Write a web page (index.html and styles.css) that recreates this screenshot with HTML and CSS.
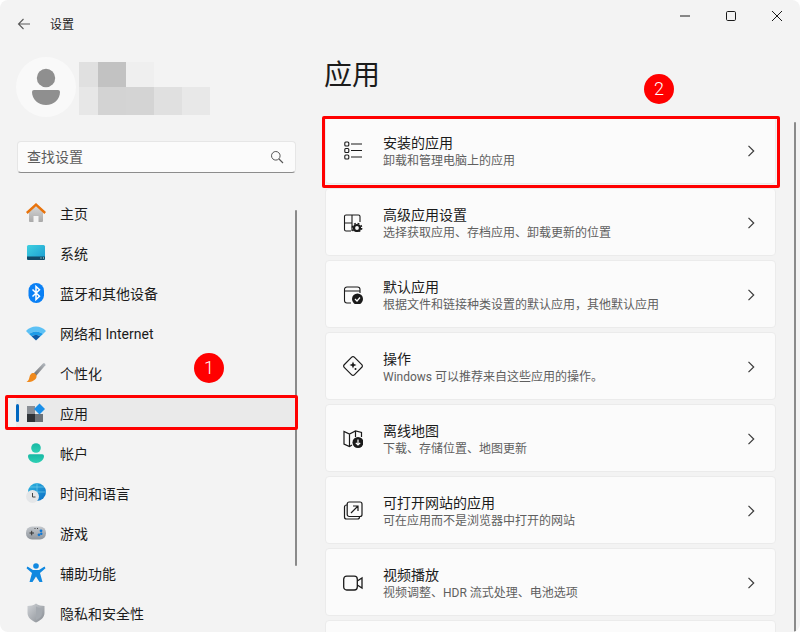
FILE: index.html
```html
<!DOCTYPE html>
<html lang="zh-CN">
<head>
<meta charset="utf-8">
<title>设置</title>
<link rel="stylesheet" href="styles.css">
</head>
<body>
<div class="window">
  <header class="titlebar">
    <svg class="back" width="16" height="16" viewBox="0 0 16 16"><path d="M14 8H2.500M7.500 3L2.500 8l5 5" fill="none" stroke="#5a5a5a" stroke-width="1.100"/></svg>
    <span class="app-name">设置</span>
    <div class="controls">
      <svg width="12" height="12" viewBox="0 0 12 12"><path d="M1 6h10" stroke="#1a1a1a" stroke-width="1"/></svg>
      <svg width="12" height="12" viewBox="0 0 12 12"><rect x="1.500" y="1.500" width="9" height="9" rx="1.200" fill="none" stroke="#1a1a1a" stroke-width="1"/></svg>
      <svg width="12" height="12" viewBox="0 0 12 12"><path d="M1 1l10 10M11 1L1 11" stroke="#1a1a1a" stroke-width="1"/></svg>
    </div>
  </header>
  <div class="content">
    <aside class="sidebar">
      <div class="user">
        <div class="avatar">
          <svg width="60" height="60" viewBox="0 0 60 60"><circle cx="30" cy="21" r="9.200" fill="#8f8f8f"/><path d="M16 35a2 2 0 0 1 2-2h24a2 2 0 0 1 2 2c0 7-6 13-14 13s-14-6-14-13z" fill="#8f8f8f"/></svg>
        </div>
        <div class="mosaic">
          <div class="mosaic-row">
            <span class="m-narrow m-c1"></span><span class="m-c2"></span><span class="m-c3"></span>
          </div>
          <div class="mosaic-row">
            <span class="m-narrow m-c4"></span><span class="m-c5"></span><span class="m-c6"></span><span class="m-c7"></span><span class="m-c8"></span>
          </div>
        </div>
      </div>
      <div class="search">
        <span class="search-text">查找设置</span>
        <svg width="14" height="14" viewBox="0 0 14 14"><circle cx="5.800" cy="5.800" r="4.300" fill="none" stroke="#555" stroke-width="1"/><path d="M9 9l4 4" stroke="#555" stroke-width="1.100"/></svg>
      </div>
      <nav class="nav">
        <a class="nav-item">
          <svg width="20" height="20" viewBox="0 0 20 20"><defs><linearGradient id="hb" x1="0" y1="0" x2="0" y2="1"><stop offset="0" stop-color="#d8d8d8"/><stop offset="1" stop-color="#a9a9a9"/></linearGradient></defs><path d="M3 9l7-6.500L17 9v9a1 1 0 0 1-1 1h-3.500v-6h-5v6H4a1 1 0 0 1-1-1z" fill="url(#hb)"/><path d="M.800 10l9.200-8.400 9.200 8.400" fill="none" stroke="#e8730c" stroke-width="2.400"/></svg>
          <span>主页</span>
        </a>
        <a class="nav-item">
          <svg width="20" height="20" viewBox="0 0 20 20"><defs><linearGradient id="sy" x1="0" y1="0" x2="1" y2="1"><stop offset="0" stop-color="#3fd0e0"/><stop offset="1" stop-color="#1a9bd0"/></linearGradient></defs><rect x="1" y="2" width="18" height="15" rx="1.500" fill="url(#sy)"/><path d="M1 13.500h18V15.500a1.500 1.500 0 0 1-1.500 1.500h-15A1.500 1.500 0 0 1 1 15.500z" fill="#124a68"/><path d="M14.500 15h1M17 15h1" stroke="#cfe" stroke-width="1"/></svg>
          <span>系统</span>
        </a>
        <a class="nav-item">
          <svg width="20" height="20" viewBox="0 0 20 20"><rect x="2.500" y="0" width="15.500" height="20" rx="7.700" fill="#0a80f5"/><path d="M6.500 6.500l7 6.700-3.500 3.300V3.500l3.500 3.300-7 6.700" fill="none" stroke="#fff" stroke-width="1.500"/></svg>
          <span>蓝牙和其他设备</span>
        </a>
        <a class="nav-item">
          <svg width="20" height="20" viewBox="0 0 20 20"><path d="M0 8C5 2 15 2 20 8L17 11C13 7.500 7 7.500 3 11z" fill="#5cc1f5"/><path d="M3 11C7 7.500 13 7.500 17 11L14.200 13.500C12 11.500 8 11.500 5.800 13.500z" fill="#1d9be8"/><path d="M5.800 13.500C8 11.500 12 11.500 14.200 13.500L10 17.500z" fill="#0c5aa8"/></svg>
          <span>网络和 Internet</span>
        </a>
        <a class="nav-item">
          <svg width="20" height="20" viewBox="0 0 20 20"><defs><linearGradient id="br" x1="0" y1="1" x2="1" y2="0"><stop offset="0" stop-color="#6f6f6f"/><stop offset="1" stop-color="#b4bac1"/></linearGradient></defs><path d="M7.500 10.500L17.200 0.300c1.500-0.500 2.500 0.500 2.200 2L10 13z" fill="url(#br)"/><path d="M6.500 10c2-0.500 4.500 1.500 4 4-0.500 3-5 5.500-10 5 2-1 2.500-3 3-5 0.400-2 1.500-3.500 3-4z" fill="#f08a1d"/></svg>
          <span>个性化</span>
        </a>
        <a class="nav-item selected">
          <svg width="20" height="20" viewBox="0 0 20 20"><rect x="1" y="3" width="8" height="8" fill="#8a8f96"/><rect x="1" y="11" width="8" height="8" fill="#2f3338"/><rect x="9" y="11" width="8" height="8" fill="#6d7278"/><path d="M13.500 0.500l5.500 5.500-5.500 5.500L8 6z" fill="#1a8fe8"/></svg>
          <span>应用</span>
        </a>
        <a class="nav-item">
          <svg width="20" height="20" viewBox="0 0 20 20"><defs><linearGradient id="ac" x1="0" y1="0" x2="0" y2="1"><stop offset="0" stop-color="#17b8a4"/><stop offset="1" stop-color="#2fd0b4"/></linearGradient></defs><circle cx="10" cy="5" r="4.800" fill="url(#ac)"/><path d="M2 13a1.800 1.800 0 0 1 1.800-1.800h12.400A1.800 1.800 0 0 1 18 13c0 4-4 7-8 7s-8-3-8-7z" fill="url(#ac)"/></svg>
          <span>帐户</span>
        </a>
        <a class="nav-item">
          <svg width="20" height="20" viewBox="0 0 20 20"><defs><linearGradient id="gl" x1="0" y1="0" x2="1" y2="1"><stop offset="0" stop-color="#2fb8e0"/><stop offset="1" stop-color="#0b6cc4"/></linearGradient></defs><circle cx="11" cy="9" r="9" fill="url(#gl)"/><path d="M11 0v18M2 9h18M4 4h14" stroke="#7fd4ee" stroke-width="0.600" fill="none"/><circle cx="6.500" cy="13.500" r="6.500" fill="#e4e6e8"/><path d="M6.500 10V14h3" fill="none" stroke="#444" stroke-width="1"/></svg>
          <span>时间和语言</span>
        </a>
        <a class="nav-item">
          <svg width="20" height="20" viewBox="0 0 20 20"><defs><linearGradient id="gm" x1="0" y1="0" x2="0" y2="1"><stop offset="0" stop-color="#c4c8cd"/><stop offset="1" stop-color="#8f959c"/></linearGradient></defs><rect x="0" y="3.500" width="20" height="13" rx="6" fill="url(#gm)"/><path d="M3.500 10h4.500M5.700 7.800v4.500" stroke="#333" stroke-width="1"/><circle cx="15" cy="7.800" r="1.400" fill="#1078d4"/><circle cx="13" cy="11.800" r="1.400" fill="#1078d4"/><circle cx="15.300" cy="10.800" r="1.200" fill="#1078d4"/><path d="M8.500 5.500h1M11 5.500h1" stroke="#444" stroke-width="1"/></svg>
          <span>游戏</span>
        </a>
        <a class="nav-item">
          <svg width="20" height="20" viewBox="0 0 20 20"><circle cx="10" cy="3" r="2.800" fill="#1088e0"/><path d="M1.500 3.500L7 7h6l5.500-3.500 1 1.800L14 10l2.500 9h-3L10 13.500 6.500 19h-3L6 10 .5 5.300z" fill="#1088e0"/></svg>
          <span>辅助功能</span>
        </a>
        <a class="nav-item">
          <svg width="20" height="20" viewBox="0 0 20 20"><defs><linearGradient id="sh" x1="0" y1="0" x2="1" y2="1"><stop offset="0" stop-color="#d0d3d7"/><stop offset="1" stop-color="#878c92"/></linearGradient></defs><path d="M10 .5c2.500 1.800 5.500 2.500 8.500 2.500v7c0 4.500-4 7.500-8.500 9.500-4.500-2-8.500-5-8.500-9.500V3c3 0 6-.7 8.500-2.500z" fill="url(#sh)"/><path d="M10 3.500c2 1.200 4 1.800 6 2v4.700c0 3.200-2.800 5.400-6 6.800z" fill="#a5aab0"/></svg>
          <span>隐私和安全性</span>
        </a>
      </nav>
    </aside>
    <main class="main">
      <h1 class="page-title">应用</h1>
      <ul class="cards">
        <li class="card">
          <svg class="card-icon" width="20" height="20" viewBox="0 0 20 20"><path d="M8 4h11M8 10.500h11M8 17h11" stroke="#1a1a1a" stroke-width="1.100"/><rect x="1.800" y="2" width="4" height="4" rx="1" fill="none" stroke="#1a1a1a" stroke-width="1.100"/><rect x="1.800" y="8.500" width="4" height="4" rx="1" fill="none" stroke="#1a1a1a" stroke-width="1.100"/><rect x="1.800" y="15" width="4" height="4" rx="1" fill="none" stroke="#1a1a1a" stroke-width="1.100"/></svg>
          <div class="card-text"><div class="card-title">安装的应用</div><div class="card-desc">卸载和管理电脑上的应用</div></div>
          <svg class="chevron" width="8" height="12" viewBox="0 0 8 12"><path d="M1.500 .8L6.700 6 1.500 11.200" fill="none" stroke="#3a3a3a" stroke-width="1.200"/></svg>
        </li>
        <li class="card">
          <svg class="card-icon" width="20" height="20" viewBox="0 0 20 20"><path d="M8 19H3a1.500 1.500 0 0 1-1.500-1.500v-13A1.500 1.500 0 0 1 3 3h12.500A1.500 1.500 0 0 1 17 4.500V10M9 3v8H1.500M9 11v8" fill="none" stroke="#1a1a1a" stroke-width="1.100"/><circle cx="14" cy="16" r="3" fill="none" stroke="#1a1a1a" stroke-width="2.200"/><circle cx="14" cy="16" r="4.700" fill="none" stroke="#1a1a1a" stroke-width="1.400" stroke-dasharray="1.800 1.900"/></svg>
          <div class="card-text"><div class="card-title">高级应用设置</div><div class="card-desc">选择获取应用、存档应用、卸载更新的位置</div></div>
          <svg class="chevron" width="8" height="12" viewBox="0 0 8 12"><path d="M1.500 .8L6.700 6 1.500 11.200" fill="none" stroke="#3a3a3a" stroke-width="1.200"/></svg>
        </li>
        <li class="card">
          <svg class="card-icon" width="20" height="20" viewBox="0 0 20 20"><path d="M8 19H4a2.500 2.500 0 0 1-2.500-2.500v-11A2.500 2.500 0 0 1 4 3h10.500A2.500 2.500 0 0 1 17 5.500V9M1.500 7H17" fill="none" stroke="#1a1a1a" stroke-width="1.100"/><circle cx="14.500" cy="15" r="5.500" fill="#1a1a1a"/><path d="M12 15l2 2 3-3.500" fill="none" stroke="#fff" stroke-width="1.200"/></svg>
          <div class="card-text"><div class="card-title">默认应用</div><div class="card-desc">根据文件和链接种类设置的默认应用，其他默认应用</div></div>
          <svg class="chevron" width="8" height="12" viewBox="0 0 8 12"><path d="M1.500 .8L6.700 6 1.500 11.200" fill="none" stroke="#3a3a3a" stroke-width="1.200"/></svg>
        </li>
        <li class="card">
          <svg class="card-icon" width="20" height="20" viewBox="0 0 20 20"><path d="M8.700 1.200a1.800 1.800 0 0 1 2.600 0l7.500 7.500a1.800 1.800 0 0 1 0 2.600l-7.500 7.500a1.800 1.800 0 0 1-2.600 0l-7.500-7.500a1.800 1.800 0 0 1 0-2.600z" fill="none" stroke="#1a1a1a" stroke-width="1.200"/><path d="M10 5.500l1 2.500 2.500 1-2.500 1-1 2.500-1-2.500-2.500-1 2.500-1z" fill="#1a1a1a"/><circle cx="12.500" cy="13" r="1" fill="#1a1a1a"/></svg>
          <div class="card-text"><div class="card-title">操作</div><div class="card-desc">Windows 可以推荐来自这些应用的操作。</div></div>
          <svg class="chevron" width="8" height="12" viewBox="0 0 8 12"><path d="M1.500 .8L6.700 6 1.500 11.200" fill="none" stroke="#3a3a3a" stroke-width="1.200"/></svg>
        </li>
        <li class="card">
          <svg class="card-icon" width="20" height="20" viewBox="0 0 20 20"><path d="M9 17l-2.500 1.500L1 16V3.500l5.500 2.500L12.500 3 18.500 4.500V9M6.500 6v12.500M12.500 3v6" fill="none" stroke="#1a1a1a" stroke-width="1.200"/><circle cx="15" cy="14.500" r="5.500" fill="#1a1a1a"/><path d="M15 11.500v5.500M12.800 14.800L15 17l2.200-2.200" fill="none" stroke="#fff" stroke-width="1.200"/></svg>
          <div class="card-text"><div class="card-title">离线地图</div><div class="card-desc">下载、存储位置、地图更新</div></div>
          <svg class="chevron" width="8" height="12" viewBox="0 0 8 12"><path d="M1.500 .8L6.700 6 1.500 11.200" fill="none" stroke="#3a3a3a" stroke-width="1.200"/></svg>
        </li>
        <li class="card">
          <svg class="card-icon" width="20" height="20" viewBox="0 0 20 20"><rect x="4.200" y="2" width="14.800" height="14.500" rx="2" fill="none" stroke="#1a1a1a" stroke-width="1.200"/><path d="M4.200 5H3.500A2 2 0 0 0 1.500 7v10a2 2 0 0 0 2 2h11a2 2 0 0 0 2-2v-.5" fill="none" stroke="#1a1a1a" stroke-width="1.200"/><path d="M8 13l7-7M10 6h5v5" fill="none" stroke="#1a1a1a" stroke-width="1.200"/></svg>
          <div class="card-text"><div class="card-title">可打开网站的应用</div><div class="card-desc">可在应用而不是浏览器中打开的网站</div></div>
          <svg class="chevron" width="8" height="12" viewBox="0 0 8 12"><path d="M1.500 .8L6.700 6 1.500 11.200" fill="none" stroke="#3a3a3a" stroke-width="1.200"/></svg>
        </li>
        <li class="card">
          <svg class="card-icon" width="20" height="20" viewBox="0 0 20 20"><rect x=".7" y="4.200" width="13.600" height="13.800" rx="3" fill="none" stroke="#1a1a1a" stroke-width="1.300"/><path d="M14.300 9l4.700-3v10l-4.700-3" fill="none" stroke="#1a1a1a" stroke-width="1.300"/></svg>
          <div class="card-text"><div class="card-title">视频播放</div><div class="card-desc">视频调整、HDR 流式处理、电池选项</div></div>
          <svg class="chevron" width="8" height="12" viewBox="0 0 8 12"><path d="M1.500 .8L6.700 6 1.500 11.200" fill="none" stroke="#3a3a3a" stroke-width="1.200"/></svg>
        </li>
        <li class="card"></li>
      </ul>
    </main>
  </div>
  <div class="scrollbar scrollbar-nav"></div>
  <div class="scrollbar scrollbar-main"></div>
  <div class="mark mark-nav"></div>
  <div class="mark mark-card"></div>
  <div class="badge badge-one">1</div>
  <div class="badge badge-two">2</div>
</div>
</body>
</html>
```
FILE: styles.css
```css
* { box-sizing: border-box; }
html, body { margin: 0; padding: 0; background: #fff; }
body { width: 800px; height: 632px; overflow: hidden; font-family: "Roboto", "Noto Sans CJK SC", sans-serif; color: #1b1b1b; }

.window { position: relative; width: 800px; height: 632px; background: #f3f3f3; border-radius: 8px; overflow: hidden; display: flex; flex-direction: column; }

.titlebar { height: 48px; flex: none; display: flex; align-items: center; padding-left: 16px; }
.back { flex: none; }
.app-name { margin: 2px 0 0 18px; font-size: 12px; line-height: 16px; }
.controls { margin-left: auto; display: flex; gap: 34px; padding-right: 17px; padding-bottom: 17px; }

.content { flex: 1; display: flex; min-height: 0; }

.sidebar { width: 325px; flex: none; padding: 9px 0 0 16px; }
.user { display: flex; align-items: flex-start; }
.avatar { width: 60px; height: 60px; border-radius: 50%; background: #f9f9f9; flex: none; }
.mosaic { margin: 5px 0 0 3px; }
.mosaic-row { display: flex; }
.mosaic-row:first-child { height: 25px; }
.mosaic-row:last-child { height: 28px; }
.mosaic-row span { width: 28px; display: block; }
.mosaic-row .m-narrow { width: 19px; }
.m-c1 { background: #e0e0e0; }
.m-c2 { background: #c2c2c2; }
.m-c3 { background: #efefef; }
.m-c4 { background: #e7e7e7; }
.m-c5 { background: #d3d3d3; }
.m-c6 { background: #d4d4d4; }
.m-c7 { background: #e0e0e0; }
.m-c8 { background: #e8e8e8; }

.search { margin: 24px 0 0 1px; width: 279px; height: 32px; display: flex; align-items: center; justify-content: space-between; padding: 0 11px 0 9px; background: #fbfbfb; border: 1px solid #e6e6e6; border-bottom: 1px solid #8c8c8c; border-radius: 4px; font-size: 14px; color: #5c5c5c; }
.search-text { margin-bottom: 2px; }

.nav { margin-top: 23px; display: flex; flex-direction: column; gap: 6px; width: 280px; }
.nav-item { position: relative; height: 34px; display: flex; align-items: center; padding-left: 10px; font-size: 14px; color: #1b1b1b; border-radius: 4px; }
.nav-item span { margin-left: 14px; }
.nav-item.selected { background: #eaeaea; }
.nav-item.selected::before { content: ""; position: absolute; left: 0; top: 8px; width: 3px; height: 18px; border-radius: 2px; background: #0067c0; }

.main { flex: 1; min-width: 0; }
.page-title { margin: 8px 0 20px -1px; height: 40px; font-size: 28px; line-height: 40px; font-weight: 400; }
.cards { list-style: none; margin: 0; padding: 0; width: 451px; display: flex; flex-direction: column; gap: 4px; }
.card { height: 68px; flex: none; display: flex; align-items: center; padding: 0 20px 0 17px; background: #fbfbfb; border: 1px solid #ebebeb; border-radius: 4px; }
.card-icon { flex: none; }
.card-text { margin-left: 20px; flex: 1; min-width: 0; padding-top: 3px; }
.card-title { font-size: 14px; line-height: 18px; color: #1b1b1b; }
.card-desc { margin-top: 1px; font-size: 12px; line-height: 16px; color: #5f5f5f; }
.chevron { flex: none; margin-top: 2px; }

.scrollbar { position: absolute; width: 2px; background: #8a8a8a; border-radius: 1px; }
.scrollbar-nav { left: 295px; top: 210px; height: 356px; }
.scrollbar-main { left: 794px; top: 122px; bottom: 0; }

.mark { position: absolute; border: 3px solid #ff0000; border-radius: 2px; }
.mark-nav { left: 5px; top: 395px; width: 293px; height: 35px; }
.mark-card { left: 322px; top: 116px; width: 458px; height: 72px; }

.badge { position: absolute; width: 30px; height: 30px; border-radius: 50%; background: #ff0000; color: #fff; font-size: 18px; font-weight: 300; line-height: 30px; text-align: center; }
.badge-one { left: 194px; top: 353px; }
.badge-two { left: 644px; top: 74px; }
```
